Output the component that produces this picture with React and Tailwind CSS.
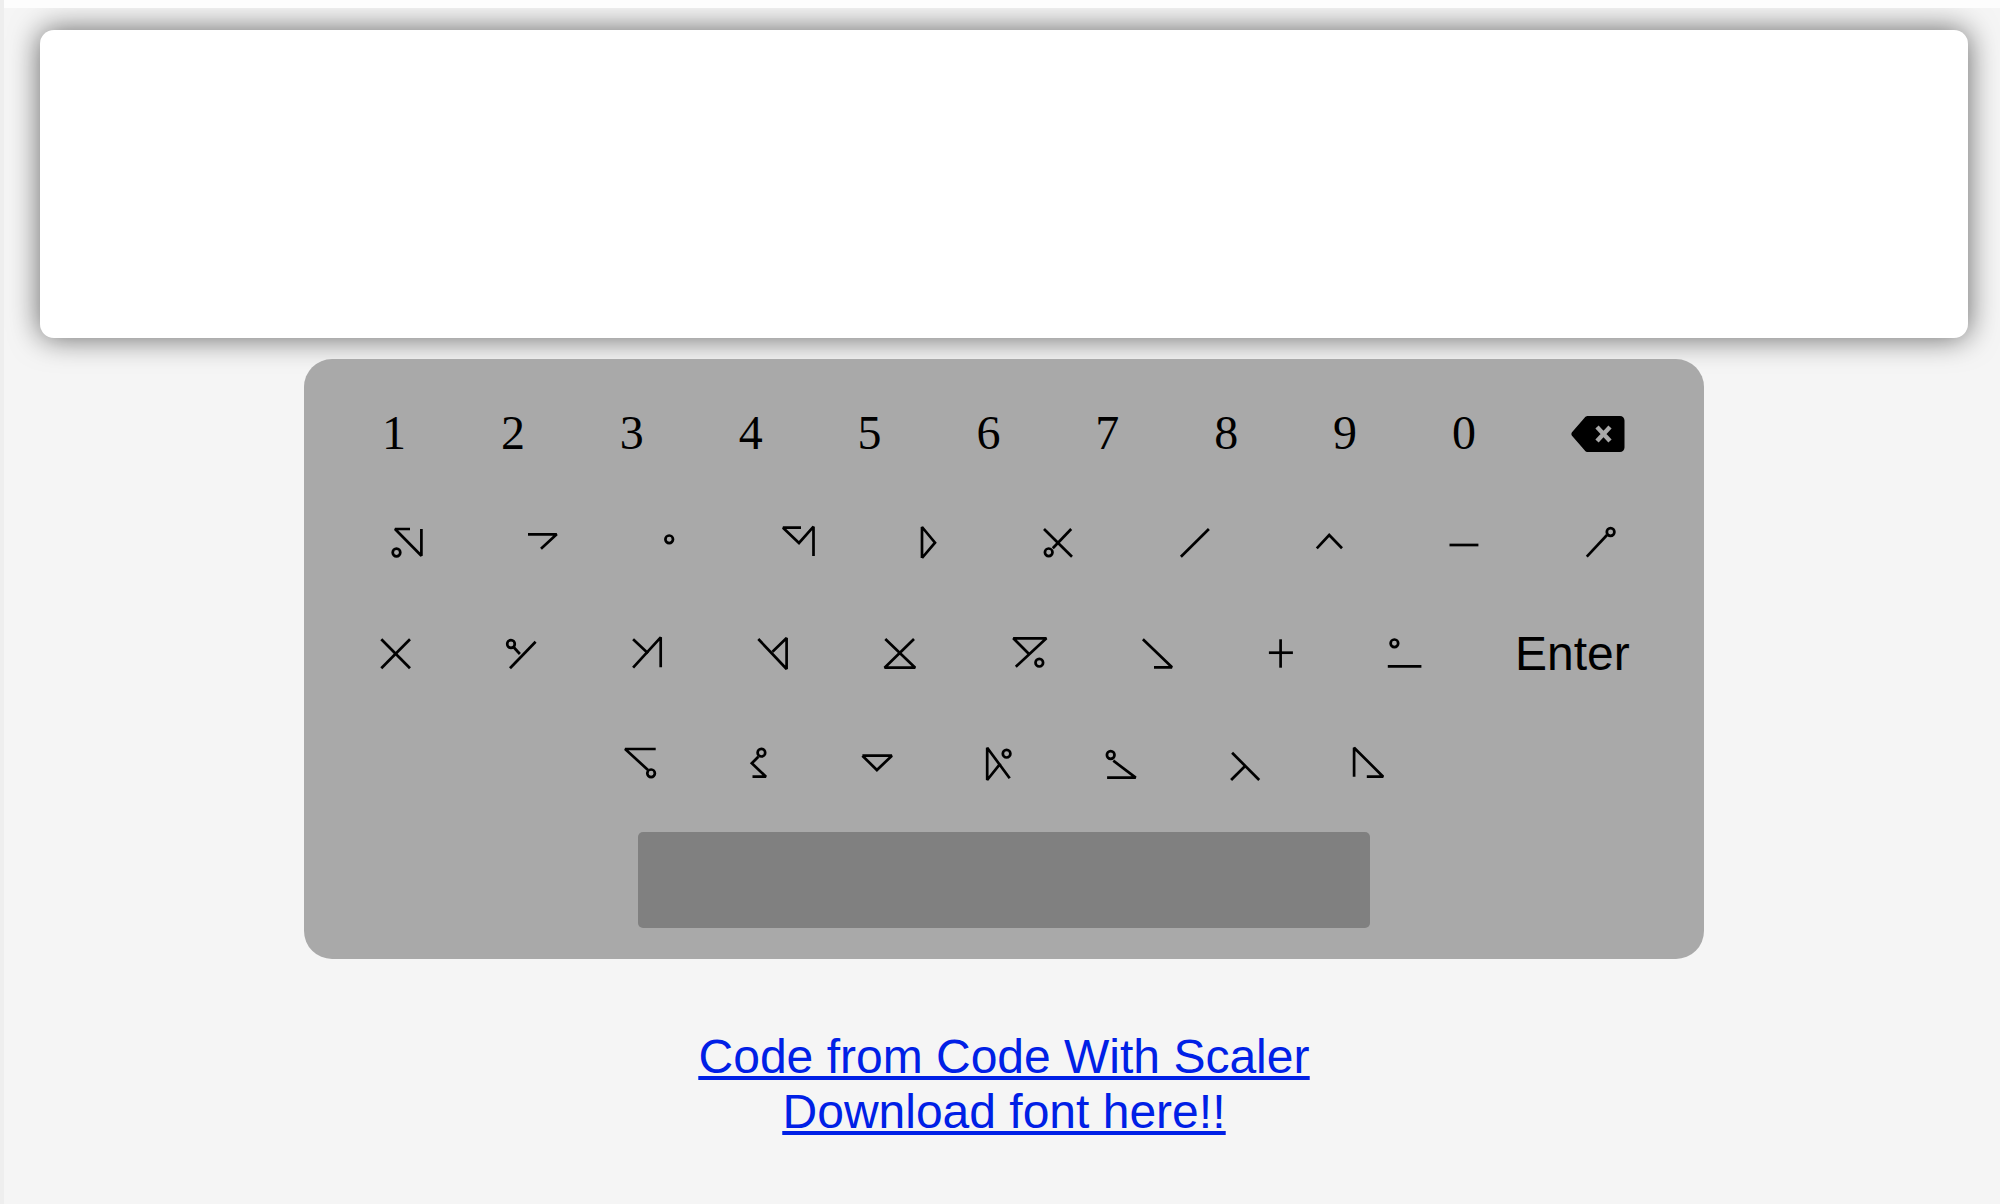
const rowTwo = [
  { p: ["410,529 395,529 421.4,555.7 421.4,529"], c: [[396.5, 552.5]] },
  { p: ["528,534.3 556.7,534.3 541,548.7"] },
  { c: [[669.2, 539.3]] },
  { p: ["801,527.7 783,527.7 799,543 813.5,526.7 813.5,556"] },
  { p: ["922,558 922,527 935,542.7 922,558"] },
  { p: ["1044,529 1072,556.7", "1071.2,529 1052.8,548.3"], c: [[1048.7, 552.3]] },
  { p: ["1208.9,529 1180.9,556.7"] },
  { p: ["1316.8,548.3 1329.2,535 1342,548.3"] },
  { p: ["1449.5,545 1478.4,545"] },
  { p: ["1586.8,556.7 1607,535"], c: [[1610.6, 532]] },
];

const rowThree = [
  { p: ["381.3,639.3 410,668.3", "410,639.3 381.3,668.3"] },
  { p: ["535.6,641.7 510,668.3", "519.9,654 513.5,647"], c: [[511, 644]] },
  { p: ["633.1,639.3 648,653.3", "633.1,667.7 660.7,637.3 660.7,667.3"] },
  { p: ["758.3,639 786.6,669 786.6,638 772.5,651.7"] },
  { p: ["885.3,639 915.2,667.7 884.6,667.7 914,639"] },
  { p: ["1015.8,666.7 1046.4,638.3 1013.3,638.3 1030,655"], c: [[1039.3, 662.7]] },
  { p: ["1142.9,639.3 1172,667.3 1154,667.3"] },
  { p: ["1268.9,652.7 1292.9,652.7", "1280.6,639.3 1280.6,667.7"] },
  { p: ["1387.8,666.3 1421.4,666.3"], c: [[1394.4, 643.3]] },
];

const rowFour = [
  { p: ["655.7,749 625.1,749 648,770"], c: [[651.1, 773.3]] },
  { p: ["758.3,756.7 751.8,763.3 766,776.7 752.5,776.7"], c: [[761.4, 752.7]] },
  { p: ["862.4,755.7 891.9,755.7 876.9,770 862.4,755.7"] },
  { p: ["1009.7,778.3 987.2,747.7 987.2,780 1000.5,763.3"], c: [[1006.6, 753.7]] },
  { p: ["1113.3,760.7 1135.7,777.7 1107.1,777.7"], c: [[1110.7, 755]] },
  { p: ["1232.1,752.7 1259.2,780", "1231.1,780 1245.4,765.7"] },
  { p: ["1354.1,776.7 1354.1,747.7 1383.2,776.7 1366.8,776.7"] },
];

const digits = ["1", "2", "3", "4", "5", "6", "7", "8", "9", "0"];

const Symbol = ({ glyph, left, top, width, height }) => (
  <svg
    width={width}
    height={height}
    viewBox={`${left} ${top} ${width} ${height}`}
    fill="none"
    stroke="#000"
    strokeWidth="2.7"
    strokeMiterlimit="2"
    className="shrink-0"
  >
    {glyph.p?.map((points) => (
      <polyline key={points} points={points} />
    ))}
    {glyph.c?.map(([cx, cy]) => (
      <circle key={cx} cx={cx} cy={cy} r="3.8" />
    ))}
  </svg>
);

const Backspace = () => (
  <svg width="54" height="36" viewBox="0 0 54 36" className="translate-y-px">
    <path
      d="M17 0H49C51.5 0 53.5 2 53.5 4.5V31.5C53.5 34 51.5 36 49 36H17C15.6 36 14.6 35.5 13.8 34.5L1 19.8C0.2 18.8 0.2 17.2 1 16.2L13.8 1.5C14.6 0.5 15.6 0 17 0Z"
      fill="#000"
    />
    <path d="M26 11L39 25M39 11L26 25" stroke="#a9a9a9" strokeWidth="4.4" />
  </svg>
);

export default function App() {
  return (
    <div className="flex min-h-screen bg-[#f5f5f5] font-['Liberation_Sans',Arial,sans-serif]">
      <div className="w-1 shrink-0 bg-[#eeeeee]" />
      <div className="flex-1 min-w-0">
        <div className="relative z-10 h-2 bg-[#fdfdfd]" />
        <div className="pl-1 pt-[22px]">
          <div className="mx-8 h-[308px] rounded-[14px] bg-white shadow-[0_0_30px_rgba(0,0,0,0.6)]" />

          <div className="mx-auto mt-[21px] w-[1400px] rounded-[28px] bg-[#a9a9a9] pt-[19px] pb-[31px]">
            <div className="flex h-[110px] justify-center">
              {digits.map((d) => (
                <button
                  key={d}
                  className="w-[118.9px] font-['Liberation_Serif',serif] text-[48px] text-black"
                >
                  {d}
                </button>
              ))}
              <button className="flex w-[150px] items-center justify-center">
                <Backspace />
              </button>
            </div>

            <div className="flex h-[110px] justify-center">
              {rowTwo.map((glyph, i) => (
                <Symbol key={i} glyph={glyph} left={339 + i * 133} top={488} width={133} height={110} />
              ))}
            </div>

            <div className="flex h-[112px] justify-center">
              {rowThree.map((glyph, i) => (
                <Symbol key={i} glyph={glyph} left={333 + i * 125} top={598} width={125} height={112} />
              ))}
              <button className="flex w-[217px] items-center pl-[57px] text-[48px] text-black">
                Enter
              </button>
            </div>

            <div className="flex h-[110px] justify-center">
              {rowFour.map((glyph, i) => (
                <Symbol key={i} glyph={glyph} left={577 + i * 122} top={710} width={122} height={110} />
              ))}
            </div>

            <div className="mx-auto mt-3 h-24 w-[732px] rounded-[5px] bg-[#808080]" />
          </div>

          <div className="mt-[70px] text-center text-[48px] leading-[55px] text-[#0020e6] underline">
            <a href="#code">Code from Code With Scaler</a>
            <br />
            <a href="#font">Download font here!!</a>
          </div>
        </div>
      </div>
    </div>
  );
}
